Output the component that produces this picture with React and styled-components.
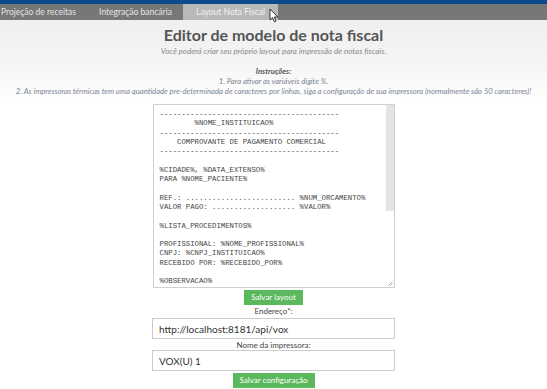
import styled, { createGlobalStyle } from 'styled-components'

const layoutTemplate = `-----------------------------------------
        %NOME_INSTITUICAO%
-----------------------------------------
    COMPROVANTE DE PAGAMENTO COMERCIAL
-----------------------------------------

%CIDADE%, %DATA_EXTENSO%
PARA %NOME_PACIENTE%

REF.: ......................... %NUM_ORCAMENTO%
VALOR PAGO: ................... %VALOR%

%LISTA_PROCEDIMENTOS%

PROFISSIONAL: %NOME_PROFISSIONAL%
CNPJ: %CNPJ_INSTITUICAO%
RECEBIDO POR: %RECEBIDO_POR%

%OBSERVACAO%
`

const tabs = [
  { label: 'Projeção de receitas', width: 88, align: 'left' },
  { label: 'Integração bancária', width: 95 },
  { label: 'Layout Nota Fiscal', width: 95, active: true },
]

const App = () => {
  return (
    <>
      <GlobalStyle />
      <Page>
        <TopBar />
        <TabBar>
          {tabs.map((tab) => (
            <Tab key={tab.label} $width={tab.width} $align={tab.align} $active={tab.active}>
              {tab.label}
            </Tab>
          ))}
          <Cursor width="10" height="15" viewBox="0 0 10 15">
            <path d="M1 1 L1 12 L3.6 9.6 L5.4 13.8 L7 13.1 L5.3 9 L8.8 9 Z" fill="#fff" stroke="#222" strokeWidth="0.9" strokeLinejoin="round" />
          </Cursor>
        </TabBar>

        <Content>
          <Title>Editor de modelo de nota fiscal</Title>
          <Subtitle>Você poderá criar seu próprio layout para impressão de notas fiscais.</Subtitle>

          <Instructions>
            <InstructionsTitle>Instruções:</InstructionsTitle>
            <InstructionLine>1. Para ativar as variáveis digite %.</InstructionLine>
            <InstructionLine>
              2. As impressoras térmicas tem uma quantidade pre-determinada de caracteres por linhas, siga a configuração de sua impressora (normalmente são 50 caracteres)!
            </InstructionLine>
          </Instructions>

          <EditorFrame>
            <Editor defaultValue={layoutTemplate} spellCheck={false} />
            <ScrollTrack>
              <ScrollThumb />
              <Grip width="6" height="6" viewBox="0 0 6 6">
                <path d="M5.5 1.5 L1.5 5.5 M5.5 3.5 L3.5 5.5" stroke="#999" strokeWidth="0.8" />
              </Grip>
            </ScrollTrack>
          </EditorFrame>
          <GreenButton>Salvar layout</GreenButton>

          <Label>Endereço*:</Label>
          <TextInput defaultValue="http://localhost:8181/api/vox" />
          <Label $tight>Nome da impressora:</Label>
          <TextInput $tight defaultValue="VOX(U) 1" />
          <GreenButton>Salvar configuração</GreenButton>
        </Content>
      </Page>
    </>
  )
}

export default App

const GlobalStyle = createGlobalStyle`
  html, body {
    margin: 0;
    padding: 0;
    background: #fff;
  }

  body {
    font-family: Lato, "Open Sans", sans-serif;
  }
`

const Page = styled.div`
  width: 547px;
  height: 389px;
  overflow: hidden;
  background: linear-gradient(#ededed 0, #f4f4f4 60px, #fff 100px);
`

const TopBar = styled.div`
  height: 4px;
  background: #0c4a8e;
`

const TabBar = styled.div`
  position: relative;
  display: flex;
  height: 16px;
  background: #777777;
`

const Tab = styled.div`
  width: ${(p) => p.$width}px;
  padding-left: ${(p) => (p.$align === 'left' ? '1px' : '0')};
  box-sizing: border-box;
  text-align: ${(p) => p.$align || 'center'};
  font-size: 8.5px;
  line-height: 16px;
  color: ${(p) => (p.$active ? '#f2f2f2' : '#e4e4e4')};
  background: ${(p) => (p.$active ? '#b9b9b9' : 'transparent')};
  white-space: nowrap;
`

const Cursor = styled.svg`
  position: absolute;
  left: 269px;
  top: 4px;
`

const Content = styled.div`
  display: flex;
  flex-direction: column;
  align-items: center;
`

const Title = styled.h1`
  margin: 4px 0 0;
  font-size: 16px;
  line-height: 22px;
  font-weight: 700;
  color: #555;
`

const Subtitle = styled.p`
  margin: 0;
  font-size: 8px;
  line-height: 10px;
  font-style: italic;
  color: #8a8a8a;
`

const Instructions = styled.div`
  margin-top: 10px;
  display: flex;
  flex-direction: column;
  align-items: center;
  font-style: italic;
  font-size: 7.7px;
  line-height: 10px;
`

const InstructionsTitle = styled.div`
  color: #555;
  font-weight: 700;
`

const InstructionLine = styled.div`
  color: #7a8592;
  white-space: nowrap;
`

const EditorFrame = styled.div`
  margin-top: 8px;
  display: flex;
  width: 242px;
  height: 184px;
  box-sizing: border-box;
  border: 1px solid #d0d0d0;
  background: #fff;
`

const Editor = styled.textarea`
  flex: 1;
  min-width: 0;
  box-sizing: border-box;
  margin: 0;
  padding: 5px 0 0 6px;
  border: none;
  background: transparent;
  font-family: "Liberation Mono", "DejaVu Sans Mono", monospace;
  font-size: 7.3px;
  line-height: 9.3px;
  color: #444;
  white-space: pre;
  overflow: hidden;
  resize: none;
  outline: none;
`

const ScrollTrack = styled.div`
  display: flex;
  flex-direction: column;
  justify-content: space-between;
  align-items: flex-end;
  width: 8px;
`

const ScrollThumb = styled.div`
  width: 8px;
  height: 106px;
  background: #e4e4e4;
`

const Grip = styled.svg`
  display: block;
  margin: 0 1px 1px 0;
`

const GreenButton = styled.button`
  margin-top: 2px;
  padding: 0 7px;
  height: 15px;
  border: none;
  border-radius: 0;
  background: #5cb85c;
  color: #fff;
  font-family: Lato, "Open Sans", sans-serif;
  font-size: 8px;
  line-height: 15px;
  cursor: pointer;
`

const Label = styled.label`
  margin-top: 1px;
  font-size: 8px;
  line-height: 10px;
  color: #444;
`

const TextInput = styled.input`
  margin-top: ${(p) => (p.$tight ? '0' : '2px')};
  width: 243px;
  height: 21px;
  box-sizing: border-box;
  padding: 0 6px;
  border: 1px solid #ccc;
  background: #fff;
  font-family: Lato, "Open Sans", sans-serif;
  font-size: 10px;
  color: #333;
  outline: none;
`
